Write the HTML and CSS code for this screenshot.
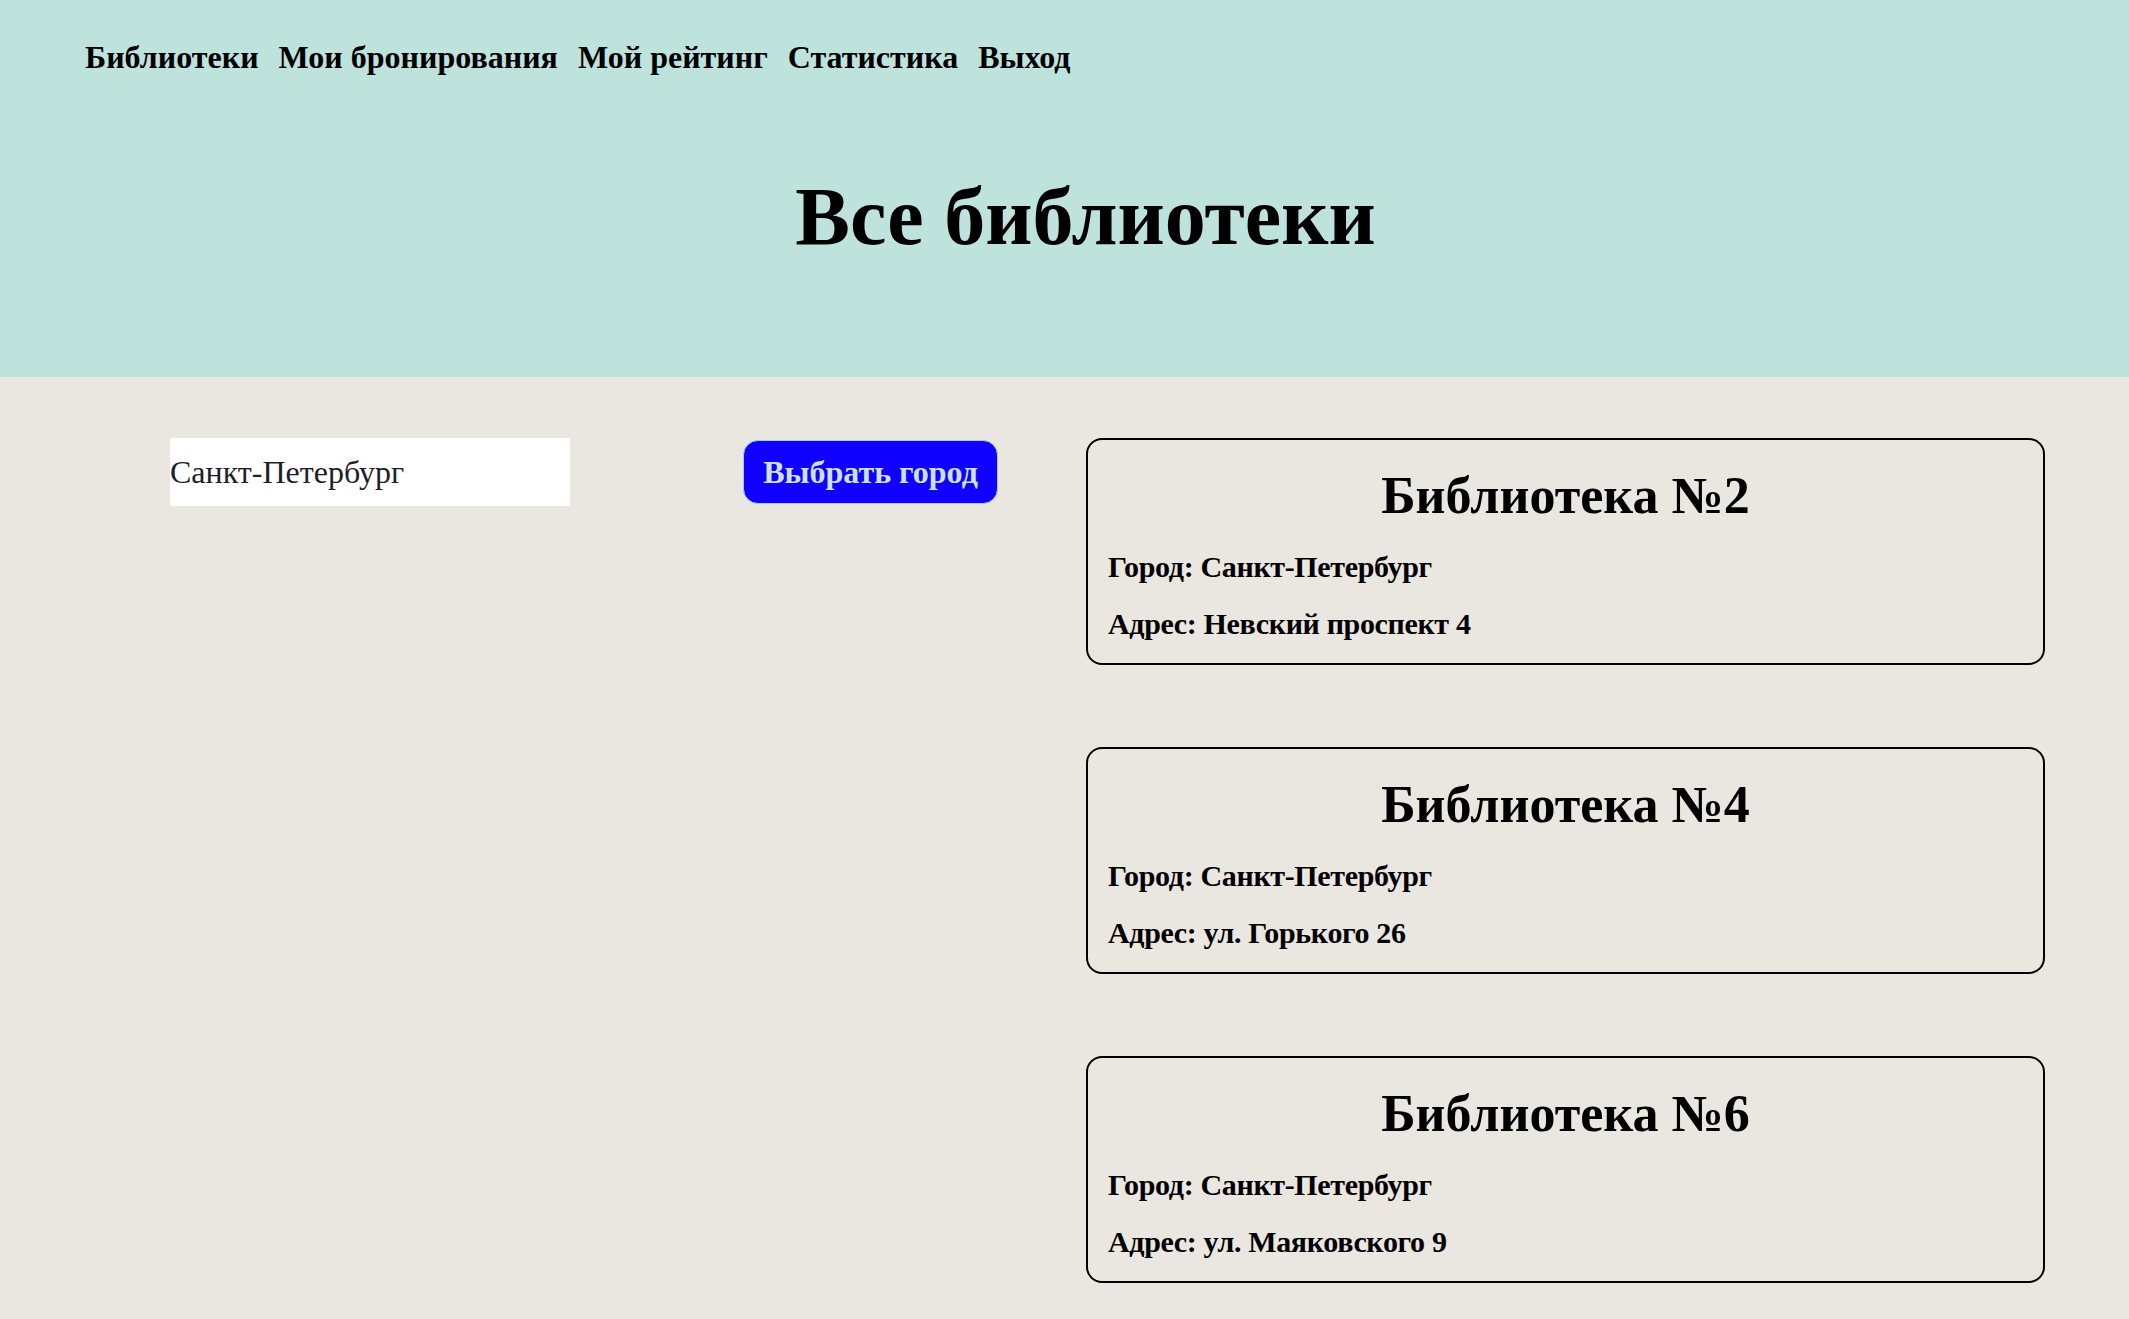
FILE: index.html
```html
<!DOCTYPE html>
<html lang="ru">
<head>
<meta charset="utf-8">
<title>Все библиотеки</title>
<link rel="stylesheet" href="styles.css">
</head>
<body>
<header class="header">
  <nav class="nav">
    <a class="nav-link" href="#">Библиотеки</a>
    <a class="nav-link" href="#">Мои бронирования</a>
    <a class="nav-link" href="#">Мой рейтинг</a>
    <a class="nav-link" href="#">Статистика</a>
    <a class="nav-link" href="#">Выход</a>
  </nav>
  <h1 class="page-title">Все библиотеки</h1>
</header>
<main class="main">
  <div class="filter">
    <input class="city-input" type="text" value="Санкт-Петербург">
    <button class="city-button" type="button">Выбрать город</button>
  </div>
  <div class="cards">
    <div class="card">
      <h2 class="card-title">Библиотека №2</h2>
      <p class="card-line">Город: Санкт-Петербург</p>
      <p class="card-line">Адрес: Невский проспект 4</p>
    </div>
    <div class="card">
      <h2 class="card-title">Библиотека №4</h2>
      <p class="card-line">Город: Санкт-Петербург</p>
      <p class="card-line">Адрес: ул. Горького 26</p>
    </div>
    <div class="card">
      <h2 class="card-title">Библиотека №6</h2>
      <p class="card-line">Город: Санкт-Петербург</p>
      <p class="card-line">Адрес: ул. Маяковского 9</p>
    </div>
  </div>
</main>
</body>
</html>
```
FILE: styles.css
```css
html, body {
  margin: 0;
  padding: 0;
}
body {
  font-family: "Liberation Serif", "Times New Roman", serif;
  background: #eae6e0;
  color: #000;
}
.header {
  background: #bee3dc;
  height: 377px;
  box-sizing: border-box;
  padding-top: 40px;
}
.nav {
  display: flex;
  gap: 20px;
  padding-left: 85px;
}
.nav-link {
  font-size: 32px;
  line-height: 35px;
  font-weight: bold;
  color: #000;
  text-decoration: none;
}
.page-title {
  margin: 97px 0 0 42px;
  font-size: 82px;
  line-height: 90px;
  font-weight: bold;
  text-align: center;
}
.main {
  display: flex;
  align-items: flex-start;
  padding: 61px 84px 40px 170px;
}
.filter {
  display: flex;
  align-items: flex-start;
  gap: 173px;
  width: 916px;
  flex: none;
}
.city-input {
  width: 400px;
  height: 68px;
  box-sizing: border-box;
  border: none;
  outline: none;
  padding: 0;
  margin: 0;
  background: #fff;
  font-family: "Liberation Serif", "Times New Roman", serif;
  font-size: 32px;
  color: #1e1e2a;
}
.city-button {
  margin-top: 2px;
  width: 255px;
  height: 64px;
  box-sizing: border-box;
  border: 1px solid #9fd0e8;
  border-radius: 15px;
  background: #1000ff;
  color: #cde0ee;
  font-family: "Liberation Serif", "Times New Roman", serif;
  font-size: 32px;
  font-weight: bold;
  padding: 0;
}
.cards {
  flex: 1;
  display: flex;
  flex-direction: column;
  gap: 82px;
}
.card {
  border: 2px solid #000;
  border-radius: 16px;
  padding: 27px 20px 22px;
}
.card-title {
  margin: 0 0 25px;
  font-size: 52px;
  line-height: 58px;
  font-weight: bold;
  text-align: center;
}
.card-line {
  margin: 0;
  font-size: 30px;
  line-height: 34px;
  font-weight: bold;
  letter-spacing: -0.35px;
}
.card-line + .card-line {
  margin-top: 23px;
}
```
